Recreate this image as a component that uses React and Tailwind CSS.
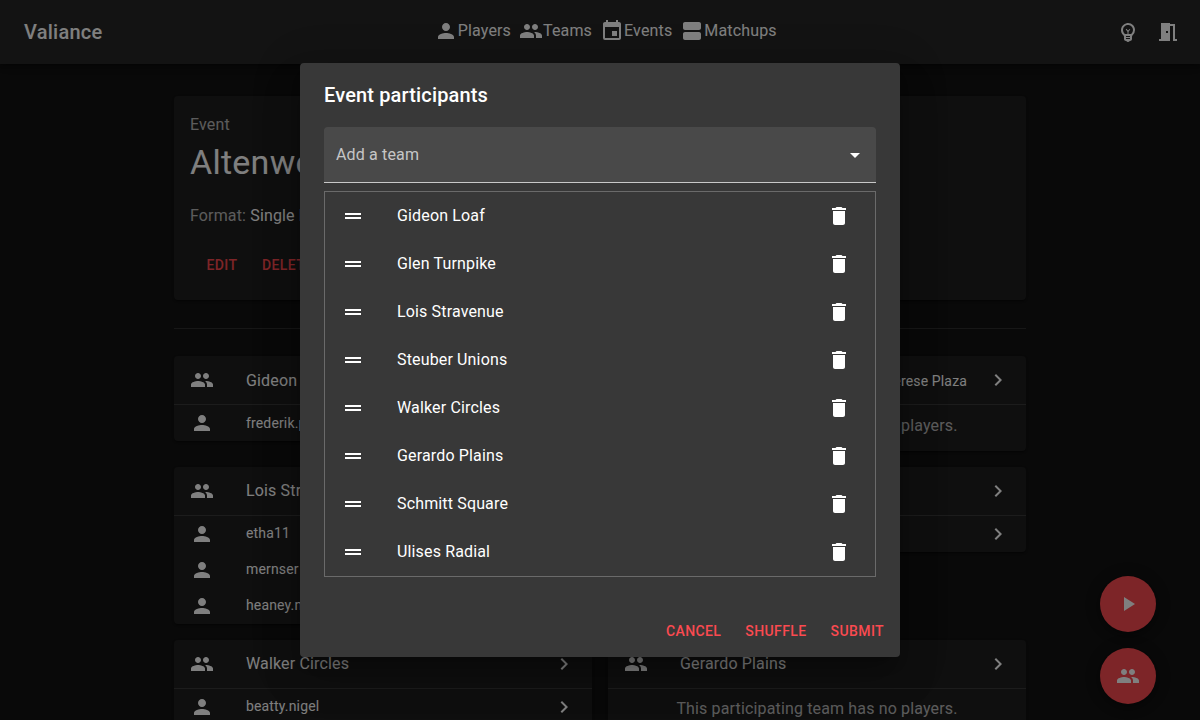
import React from "react";
import {
  MdPerson,
  MdPeople,
  MdEvent,
  MdViewAgenda,
  MdOutlineEmojiObjects,
  MdMeetingRoom,
  MdChevronRight,
  MdPlayArrow,
  MdDragHandle,
  MdDelete,
  MdArrowDropDown,
} from "react-icons/md";

const navLinks = [
  { label: "Players", Icon: MdPerson },
  { label: "Teams", Icon: MdPeople },
  { label: "Events", Icon: MdEvent },
  { label: "Matchups", Icon: MdViewAgenda },
];

const teams = [
  { name: "Gideon Loaf", players: ["frederik.p"] },
  { name: "Glen Turnpike", note: "Therese Plaza", players: [] },
  { name: "Lois Stravenue", players: ["etha11", "mernser", "heaney.n"] },
  { name: "Steuber Unions", players: ["steuber"] },
  { name: "Walker Circles", players: ["beatty.nigel"] },
  { name: "Gerardo Plains", players: [] },
];

const participants = [
  "Gideon Loaf",
  "Glen Turnpike",
  "Lois Stravenue",
  "Steuber Unions",
  "Walker Circles",
  "Gerardo Plains",
  "Schmitt Square",
  "Ulises Radial",
];

const cardClass =
  "rounded bg-[#1e1e1e] shadow-[0_2px_1px_-1px_rgba(0,0,0,0.2),0_1px_1px_0_rgba(0,0,0,0.14),0_1px_3px_0_rgba(0,0,0,0.12)]";

const buttonClass =
  "h-[36.5px] min-w-16 rounded px-2 text-sm font-medium tracking-[0.02857em] text-[#fb4a50] uppercase";

const fabClass =
  "flex size-14 items-center justify-center rounded-full bg-[#fb4a50] shadow-[0_3px_5px_-1px_rgba(0,0,0,0.2),0_6px_10px_0_rgba(0,0,0,0.14),0_1px_18px_0_rgba(0,0,0,0.12)]";

function TopBar() {
  return (
    <header className="relative flex h-16 shrink-0 items-center justify-between bg-[#272727] pr-3 pl-6 shadow-[0_2px_4px_-1px_rgba(0,0,0,0.2),0_4px_5px_0_rgba(0,0,0,0.14),0_1px_10px_0_rgba(0,0,0,0.12)]">
      <div className="text-xl leading-8 font-medium tracking-[0.012em]">Valiance</div>
      <nav className="flex gap-2 pb-0.5">
        {navLinks.map(({ label, Icon }) => (
          <a key={label} className="flex items-center">
            <Icon className="size-6" />
            {label}
          </a>
        ))}
      </nav>
      <div className="flex">
        <button className="flex size-10 items-center justify-center">
          <MdOutlineEmojiObjects className="size-6" />
        </button>
        <button className="flex size-10 items-center justify-center">
          <MdMeetingRoom className="size-6" />
        </button>
      </div>
    </header>
  );
}

function TeamCard({ team }) {
  return (
    <section className={cardClass}>
      <div className="flex h-[49px] items-center border-b border-white/12 px-4">
        <MdPeople className="mr-8 size-6" />
        <span className="flex-1 pt-[0.6px]">{team.name}</span>
        {team.note && (
          <span className="mr-[19px] pt-0.5 text-sm tracking-[0.01071em]">{team.note}</span>
        )}
        <MdChevronRight className="size-6" />
      </div>
      {team.players.map((player) => (
        <div key={player} className="flex h-9 items-center px-4">
          <MdPerson className="mr-8 size-6" />
          <span className="flex-1 pb-[0.9px] text-sm tracking-[0.01071em]">{player}</span>
          <MdChevronRight className="size-6" />
        </div>
      ))}
      {team.players.length === 0 && (
        <p className="pt-[8.3px] pb-[13.7px] text-center text-white/70">
          This participating team has no players.
        </p>
      )}
    </section>
  );
}

function ParticipantsDialog() {
  return (
    <div className="absolute inset-0 flex items-center justify-center bg-black/50">
      <div
        role="dialog"
        className="flex h-[594px] w-[600px] flex-col rounded bg-[#383838] shadow-[0_11px_15px_-7px_rgba(0,0,0,0.2),0_24px_38px_3px_rgba(0,0,0,0.14),0_9px_46px_8px_rgba(0,0,0,0.12)]"
      >
        <h2 className="px-6 py-4 text-xl leading-8 font-medium tracking-[0.0075em]">
          Event participants
        </h2>
        <div className="flex flex-1 flex-col gap-2 px-6">
          <div className="flex h-14 items-center justify-between rounded-t border-b border-white/70 bg-white/9 pr-[9px] pl-3">
            <span className="text-white/70">Add a team</span>
            <MdArrowDropDown className="size-6" />
          </div>
          <ul className="border border-white/25">
            {participants.map((name) => (
              <li key={name} className="flex h-12 items-center pr-6 pl-4">
                <MdDragHandle className="mr-8 size-6" />
                <span className="flex-1">{name}</span>
                <MdDelete className="size-6" />
              </li>
            ))}
          </ul>
        </div>
        <div className="flex justify-end gap-2 p-2">
          <button className={buttonClass}>Cancel</button>
          <button className={buttonClass}>Shuffle</button>
          <button className={buttonClass}>Submit</button>
        </div>
      </div>
    </div>
  );
}

export default function App() {
  return (
    <div className="relative flex h-[720px] flex-col overflow-hidden bg-[#121212] font-[Roboto,sans-serif] text-base tracking-[0.00938em] text-white">
      <TopBar />
      <main className="mx-auto w-[852px] pt-8">
        <section className={`${cardClass} h-[204px] px-4 pt-[17px]`}>
          <p className="text-white/70">Event</p>
          <h1 className="mt-[4px] text-[34px] leading-[42px] tracking-[0.00735em]">
            Altenwerth
          </h1>
          <p className="mt-[20.6px] text-white/70">
            Format: <span className="text-white">Single Elimination</span>
          </p>
          <div className="mt-[19px] flex">
            <button className={buttonClass}>Edit</button>
            <button className={buttonClass}>Delete</button>
          </div>
        </section>
        <hr className="mt-7 border-white/12" />
        <div className="mt-[27.25px] grid grid-cols-2 items-start gap-x-4 gap-y-[15.65px]">
          {teams.map((team) => (
            <TeamCard key={team.name} team={team} />
          ))}
        </div>
      </main>
      <div className="absolute right-11 bottom-4 flex flex-col gap-4">
        <button className={fabClass}>
          <MdPlayArrow className="size-6" />
        </button>
        <button className={fabClass}>
          <MdPeople className="size-6" />
        </button>
      </div>
      <ParticipantsDialog />
    </div>
  );
}
